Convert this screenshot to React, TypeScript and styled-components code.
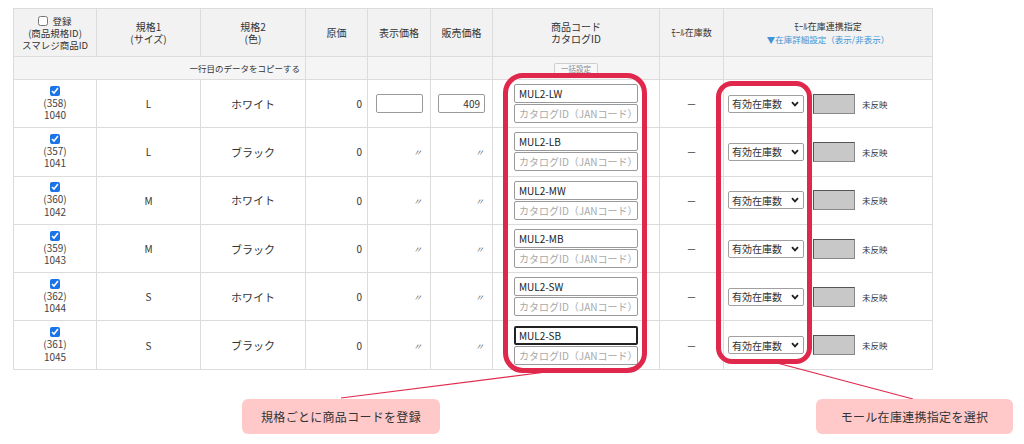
import React from 'react';
import styled, { createGlobalStyle } from 'styled-components';

const GlobalStyle = createGlobalStyle`
  html, body {
    margin: 0;
    padding: 0;
    background: #ffffff;
  }
  body {
    font-family: "Noto Sans CJK JP", "Noto Sans", sans-serif;
    color: #333;
  }
`;

const Page = styled.div`
  position: relative;
  width: 1024px;
  height: 444px;
  padding: 8px 0 0 13px;
  box-sizing: border-box;
  overflow: hidden;
`;

const Table = styled.table`
  border-collapse: collapse;
  table-layout: fixed;
  width: 919px;
  font-size: 10px;
  border: 1px solid #dcdcdc;
`;

const Th = styled.th<{ $size?: number }>`
  background: #f2f2f2;
  border: 1px solid #dcdcdc;
  font-weight: normal;
  font-size: ${(p) => p.$size || 10}px;
  line-height: 12px;
  height: 47px;
  padding: 0;
  color: #333;
  text-align: center;
  vertical-align: middle;
`;

const HeadLine = styled.div<{ $size?: number }>`
  font-size: ${(p) => p.$size || 9.5}px;
  line-height: 12px;
  white-space: nowrap;
`;

const CopyCell = styled.td<{ $align?: string }>`
  background: #f5f5f5;
  border: 1px solid #dcdcdc;
  height: 22px;
  padding: 0 5px;
  font-size: 8.5px;
  text-align: ${(p) => p.$align || 'center'};
  vertical-align: middle;
`;

const Td = styled.td<{ $align?: string; $pad?: string; $size?: number }>`
  border: 1px solid #dcdcdc;
  height: 47px;
  padding: ${(p) => p.$pad || '0'};
  text-align: ${(p) => p.$align || 'center'};
  vertical-align: middle;
  font-size: ${(p) => p.$size || 10}px;
  color: #333;
`;

const IdStack = styled.div`
  display: flex;
  flex-direction: column;
  align-items: center;
  font-size: 10px;
  color: #444;
  span {
    line-height: 12.5px;
  }
`;

const Check = styled.input.attrs({ type: 'checkbox' })`
  margin: 0 0 1px;
  width: 10px;
  height: 10px;
  accent-color: #1a73e8;
`;

const HeadCheck = styled.input.attrs({ type: 'checkbox' })`
  margin: 0 4px 0 0;
  width: 10px;
  height: 10px;
  vertical-align: -1px;
`;

const LinkText = styled.div`
  color: #3d95d6;
  font-size: 8.5px;
  line-height: 12px;
`;

const PriceInput = styled.input`
  box-sizing: border-box;
  width: 47px;
  height: 19px;
  border: 1px solid #9a9a9a;
  border-radius: 2px;
  font-size: 10px;
  text-align: right;
  padding: 0 4px;
  font-family: inherit;
  color: #333;
`;

const Ditto = styled.span`
  font-size: 9px;
  color: #555;
  font-style: italic;
`;

const CodeStack = styled.div`
  display: flex;
  flex-direction: column;
  align-items: center;
  gap: 1px;
`;

const CodeInput = styled.input<{ $focus?: boolean }>`
  box-sizing: border-box;
  width: 124px;
  height: 19px;
  border: ${(p) => (p.$focus ? '2px solid #222' : '1px solid #9a9a9a')};
  border-radius: 2px;
  padding: 0 ${(p) => (p.$focus ? '3px' : '4px')};
  font-size: 10px;
  font-family: inherit;
  color: #222;
  &::placeholder {
    color: #a8a8a8;
  }
`;

const BulkButton = styled.button`
  font-size: 7.5px;
  color: #888;
  background: #f8f8f8;
  border: 1px solid #cfcfcf;
  border-radius: 2px;
  padding: 0 6px;
  height: 12px;
  line-height: 10px;
  font-family: inherit;
`;

const SyncRow = styled.div`
  display: flex;
  align-items: center;
  padding-left: 4px;
`;

const SelectWrap = styled.div`
  position: relative;
  width: 76px;
  height: 18px;
`;

const Select = styled.select`
  appearance: none;
  -webkit-appearance: none;
  box-sizing: border-box;
  width: 100%;
  height: 100%;
  border: 1px solid #a0a0a0;
  border-radius: 2px;
  background: #fff;
  font-size: 10px;
  font-family: inherit;
  color: #333;
  padding: 0 0 0 3px;
`;

const Chevron = styled.svg`
  position: absolute;
  right: 5px;
  top: 6px;
  pointer-events: none;
`;

const StockBox = styled.div`
  box-sizing: border-box;
  width: 42px;
  height: 20px;
  margin-left: 9px;
  background: #c8c8c8;
  border: 1px solid #888;
  border-top-color: #555;
  border-left-color: #555;
`;

const Pending = styled.span`
  margin-left: 7px;
  font-size: 8.5px;
  color: #333;
`;

const Highlight = styled.div<{ $x: number; $y: number; $w: number; $h: number; $r: number }>`
  position: absolute;
  left: ${(p) => p.$x}px;
  top: ${(p) => p.$y}px;
  width: ${(p) => p.$w}px;
  height: ${(p) => p.$h}px;
  border: 5px solid #e0284c;
  border-radius: ${(p) => p.$r}px;
  box-sizing: border-box;
  pointer-events: none;
`;

const Leaders = styled.svg`
  position: absolute;
  left: 0;
  top: 0;
  pointer-events: none;
`;

const Callout = styled.div<{ $x: number; $w: number }>`
  position: absolute;
  left: ${(p) => p.$x}px;
  top: 399px;
  width: ${(p) => p.$w}px;
  height: 35px;
  background: #ffc9c9;
  border-radius: 6px;
  display: flex;
  align-items: center;
  justify-content: center;
  font-size: 12px;
  color: #333;
  letter-spacing: 0.3px;
`;

type Row = { id: number; smaregi: number; size: string; color: string; code: string };

const rows: Row[] = [
  { id: 358, smaregi: 1040, size: 'L', color: 'ホワイト', code: 'MUL2-LW' },
  { id: 357, smaregi: 1041, size: 'L', color: 'ブラック', code: 'MUL2-LB' },
  { id: 360, smaregi: 1042, size: 'M', color: 'ホワイト', code: 'MUL2-MW' },
  { id: 359, smaregi: 1043, size: 'M', color: 'ブラック', code: 'MUL2-MB' },
  { id: 362, smaregi: 1044, size: 'S', color: 'ホワイト', code: 'MUL2-SW' },
  { id: 361, smaregi: 1045, size: 'S', color: 'ブラック', code: 'MUL2-SB' },
];

const widths = [83, 104, 105, 62, 63, 62, 167, 64, 209];

const App = () => {
  return (
    <Page>
      <GlobalStyle />
      <Table>
        <colgroup>
          {widths.map((w, i) => (
            <col key={i} style={{ width: w }} />
          ))}
        </colgroup>
        <thead>
          <tr>
            <Th>
              <HeadLine>
                <HeadCheck />
                登録
              </HeadLine>
              <HeadLine>(商品規格ID)</HeadLine>
              <HeadLine>スマレジ商品ID</HeadLine>
            </Th>
            <Th>
              <HeadLine $size={10}>規格1</HeadLine>
              <HeadLine $size={10}>(サイズ)</HeadLine>
            </Th>
            <Th>
              <HeadLine $size={10}>規格2</HeadLine>
              <HeadLine $size={10}>(色)</HeadLine>
            </Th>
            <Th>原価</Th>
            <Th>表示価格</Th>
            <Th>販売価格</Th>
            <Th>
              <HeadLine $size={10}>商品コード</HeadLine>
              <HeadLine $size={10}>カタログID</HeadLine>
            </Th>
            <Th $size={9}>ﾓｰﾙ在庫数</Th>
            <Th>
              <HeadLine $size={9}>ﾓｰﾙ在庫連携指定</HeadLine>
              <LinkText>▼在庫詳細設定（表示/非表示）</LinkText>
            </Th>
          </tr>
        </thead>
        <tbody>
          <tr>
            <CopyCell colSpan={3} $align="right">
              一行目のデータをコピーする
            </CopyCell>
            <CopyCell />
            <CopyCell />
            <CopyCell />
            <CopyCell>
              <BulkButton>一括設定</BulkButton>
            </CopyCell>
            <CopyCell />
            <CopyCell />
          </tr>
          {rows.map((r, i) => (
            <tr key={r.id} style={{ height: 48.3 }}>
              <Td>
                <IdStack>
                  <Check defaultChecked />
                  <span>({r.id})</span>
                  <span>{r.smaregi}</span>
                </IdStack>
              </Td>
              <Td>{r.size}</Td>
              <Td $size={11}>{r.color}</Td>
              <Td $align="right" $pad="0 5px 0 0">
                0
              </Td>
              <Td $align={i === 0 ? 'center' : 'right'} $pad={i === 0 ? '0' : '0 8px 0 0'}>
                {i === 0 ? <PriceInput defaultValue="" /> : <Ditto>〃</Ditto>}
              </Td>
              <Td $align={i === 0 ? 'center' : 'right'} $pad={i === 0 ? '0' : '0 8px 0 0'}>
                {i === 0 ? <PriceInput defaultValue="409" /> : <Ditto>〃</Ditto>}
              </Td>
              <Td>
                <CodeStack>
                  <CodeInput defaultValue={r.code} $focus={i === rows.length - 1} />
                  <CodeInput placeholder="カタログID（JANコード）" />
                </CodeStack>
              </Td>
              <Td>－</Td>
              <Td $align="left">
                <SyncRow>
                  <SelectWrap>
                    <Select defaultValue="valid">
                      <option value="valid">有効在庫数</option>
                      <option value="all">全在庫数</option>
                    </Select>
                    <Chevron width="8" height="6" viewBox="0 0 8 6">
                      <path d="M1 1.2 L4 4.4 L7 1.2" fill="none" stroke="#222" strokeWidth="1.8" />
                    </Chevron>
                  </SelectWrap>
                  <StockBox />
                  <Pending>未反映</Pending>
                </SyncRow>
              </Td>
            </tr>
          ))}
        </tbody>
      </Table>

      <Highlight $x={503} $y={73} $w={144} $h={300} $r={20} />
      <Highlight $x={716} $y={81} $w={96} $h={283} $r={16} />

      <Leaders width="1024" height="444" viewBox="0 0 1024 444">
        <line x1="341" y1="398" x2="554" y2="371" stroke="#e0284c" strokeWidth="1.2" />
        <line x1="777" y1="363" x2="913" y2="399" stroke="#e0284c" strokeWidth="1.2" />
      </Leaders>

      <Callout $x={242} $w={198}>規格ごとに商品コードを登録</Callout>
      <Callout $x={816} $w={197}>モール在庫連携指定を選択</Callout>
    </Page>
  );
};

export default App;
